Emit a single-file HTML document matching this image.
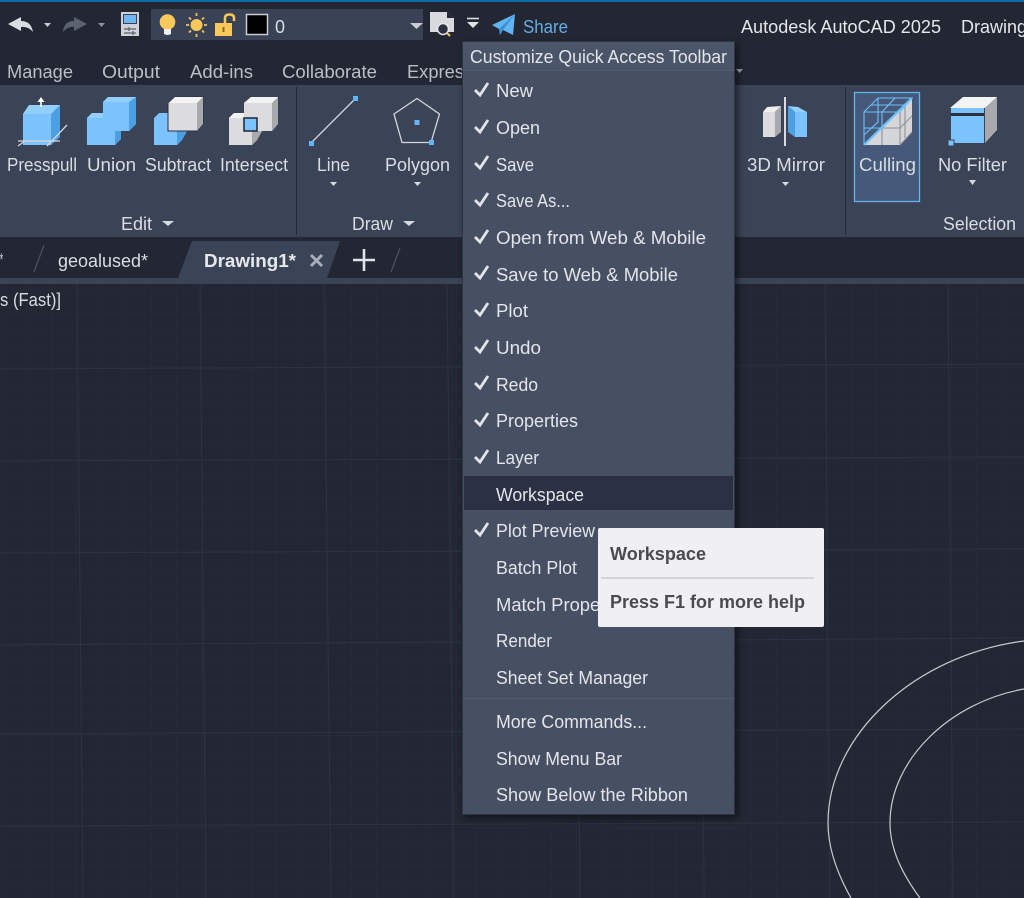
<!DOCTYPE html>
<html><head><meta charset="utf-8"><title>AutoCAD</title>
<style>
html,body{margin:0;padding:0;background:#222733;width:1024px;height:898px;overflow:hidden}
svg{display:block;filter:blur(.35px)}
text{font-family:"Liberation Sans",sans-serif;font-size:18.5px;fill:#d8dce3}
.m text{fill:#e2e5ea}
.b{font-weight:bold;font-size:18px}
</style></head><body>
<svg width="1024" height="898" viewBox="0 0 1024 898" xmlns="http://www.w3.org/2000/svg">
<defs>
<pattern id="g" width="25" height="18.4" patternUnits="userSpaceOnUse" x="2" y="0"><path d="M25 0V18.4M0 18.4H25" stroke="#262c38" stroke-width="1" fill="none"/></pattern>
<filter id="s" x="-10%" y="-5%" width="120%" height="110%"><feDropShadow dx="3" dy="3" stdDeviation="4" flood-color="#000" flood-opacity=".5"/></filter>
</defs>
<rect width="1024" height="898" fill="#222733"/>
<!-- canvas -->
<rect y="284" width="1024" height="614" fill="url(#g)"/>
<g stroke="#2d3341" stroke-width="1" fill="none">
<path d="M77 284L83 898M200 284L206 898M324 284L331 898M447 284L454 898M575 284L580 898M700 284L704 898M825 284L830 898M948 284L953 898"/>
<path d="M0 369L1024 364M0 461L1024 457M0 553L1024 549M0 645L1024 638M0 734L1024 729M0 826L1024 822"/>
</g>
<g fill="none" stroke="#c6cad1" stroke-width="1.200">
<path d="M1024 641C915 655 828 735 828 823C828 850 838 875 851 898"/>
<path d="M1024 689C950 702 890 760 890 823C890 850 903 875 920 898"/>
</g>
<text x="0" y="306" textLength="61" lengthAdjust="spacingAndGlyphs">s (Fast)]</text>

<!-- top bar -->
<rect width="1024" height="85" fill="#222733"/>
<rect width="1024" height="2" fill="#0b6eab"/>
<path d="M8 24L21 17V21Q31 21 33 32Q28 26 21 27V31Z" fill="#d9dce1"/>
<path d="M44 23H51L47.500 27Z" fill="#c9ccd2"/>
<path d="M87 24L74 17V21Q64 21 63 32Q68 26 74 27V31Z" fill="#5b6373"/>
<path d="M98 23H105L101.500 27Z" fill="#8b909a"/>
<rect x="121" y="12" width="18" height="24" fill="#cfd1d6"/>
<rect x="123.500" y="14.500" width="13" height="9" fill="#6db6f2" stroke="#3a4355"/>
<path d="M124 29H136M124 33H136" stroke="#5a6070" stroke-width="1.200"/>
<path d="M129 27V31M133 31V35" stroke="#5a6070" stroke-width="1.200"/>
<rect x="151" y="9" width="272" height="31" fill="#3a4355"/>
<circle cx="167.500" cy="22" r="7.800" fill="#f9c85b"/>
<path d="M164 29H171V34Q167.500 36 164 34Z" fill="#eef0f2"/>
<circle cx="196.500" cy="25" r="6" fill="#f9c85b"/>
<path d="M196.500 13V16M196.500 34V37M186 25H189M204 25H207M189 17.500L191 19.500M202 30.500L204 32.500M204 17.500L202 19.500M191 30.500L189 32.500" stroke="#f4c45c" stroke-width="1.800"/>
<rect x="215" y="23" width="17" height="13" fill="#f9c85b"/>
<path d="M225 23V18Q225 14.500 229.500 14.500Q234 14.500 234 18V21" fill="none" stroke="#f9c85b" stroke-width="2.500"/>
<rect x="222.500" y="27" width="2" height="5" fill="#8a6a2a"/>
<rect x="246.500" y="14.500" width="21" height="20" fill="#000" stroke="#c9ccd2" stroke-width="1.500"/>
<text x="275" y="33" textLength="10" lengthAdjust="spacingAndGlyphs">0</text>
<path d="M410 23H423L416.500 29Z" fill="#c9ccd2"/>
<path d="M430 12H447L454 18V32H430Z" fill="#d8dade"/>
<path d="M447 12L454 18H447Z" fill="#222733"/>
<circle cx="443" cy="29" r="5.500" fill="#2c3240" stroke="#e6e8ea" stroke-width="1.500"/>
<path d="M447 33L450 36" stroke="#f2c35c" stroke-width="2"/>
<path d="M467 18.500H479" stroke="#d8dade" stroke-width="1.600"/>
<path d="M467 22H479L473 28Z" fill="#e2e4e8"/>
<path d="M492 25L515 14L513 35L503 30L500 35L499 29Z" fill="#62b4f2"/>
<path d="M499 29L515 14L503 30L500 35Z" fill="#3c8fd4"/>
<text x="523" y="33" textLength="45" lengthAdjust="spacingAndGlyphs" style="fill:#66aee6">Share</text>
<text x="741" y="33" textLength="200" lengthAdjust="spacingAndGlyphs" style="fill:#e4e6ea">Autodesk AutoCAD 2025</text>
<text x="961" y="33" textLength="66" lengthAdjust="spacingAndGlyphs" style="fill:#e4e6ea">Drawing</text>

<!-- ribbon tabs -->
<text x="7" y="78" textLength="66" lengthAdjust="spacingAndGlyphs" style="fill:#b9bec7">Manage</text>
<text x="102" y="78" textLength="58" lengthAdjust="spacingAndGlyphs" style="fill:#b9bec7">Output</text>
<text x="190" y="78" textLength="63" lengthAdjust="spacingAndGlyphs" style="fill:#b9bec7">Add-ins</text>
<text x="282" y="78" textLength="95" lengthAdjust="spacingAndGlyphs" style="fill:#b9bec7">Collaborate</text>
<text x="407" y="78" textLength="66" lengthAdjust="spacingAndGlyphs" style="fill:#b9bec7">Express</text>

<!-- ribbon -->
<rect y="85" width="1024" height="152" fill="#3b4456"/>
<path d="M296.500 87V235M845.500 87V235" stroke="#232834" stroke-width="1"/>

<!-- presspull -->
<path d="M23 114L29 105H60V137L51 145H23Z" fill="#7cc2fc"/>
<path d="M23 114L29 105H60L51 114Z" fill="#93cffc"/>
<path d="M51 114L60 105V137L51 145Z" fill="#4c9fe2"/>
<path d="M18 141H60M18 146L25 141M47 146L67 125" stroke="#d8dade" stroke-width="1.300" fill="none"/>
<path d="M41 107V100" stroke="#fff" stroke-width="1.600"/>
<path d="M37.500 102L41 97L44.500 102Z" fill="#fff"/>
<!-- union -->
<path d="M87 118L92 113H103V102L108 97H136V124L129 131H121V139L115 145H87Z" fill="#7cc2fc"/>
<path d="M103 102L108 97H136L129 102ZM87 118L92 113H103V118Z" fill="#93cffc"/>
<path d="M129 102L136 97V124L129 131ZM115 131H121V139L115 145Z" fill="#4c9fe2"/>
<!-- subtract -->
<path d="M154 118L159 113H168V131H187L182 140L177 145H154Z" fill="#7cc2fc"/>
<path d="M177 131H187L182 140L177 145Z" fill="#4c9fe2"/>
<path d="M168 103L175 97H203V124L197 131H168Z" fill="#dcdcdf" stroke="#2a3040" stroke-width="1"/>
<path d="M168.500 103L175 97H203L197 103Z" fill="#f3f3f4"/>
<path d="M197 103L203 97V124L197 131Z" fill="#a8a9ad"/>
<!-- intersect -->
<path d="M229 118L234 113H244V131H262L257 140L252 145H229Z" fill="#dcdcdf"/>
<path d="M229 118L234 113H244V118Z" fill="#f3f3f4"/>
<path d="M244 103L251 97H278V124L272 131H244Z" fill="#dcdcdf"/>
<path d="M244 103L251 97H278L272 103Z" fill="#f3f3f4"/>
<path d="M272 103L278 97V124L272 131ZM252 131H262L257 140L252 145Z" fill="#a8a9ad"/>
<rect x="244" y="118" width="13" height="13" fill="#7cc2fc" stroke="#1f2533" stroke-width="1.500"/>
<!-- line -->
<path d="M311 143L355 99" stroke="#d4d7dd" stroke-width="1.300"/>
<rect x="309" y="141" width="5" height="5" fill="#63b6f5"/><rect x="353" y="96" width="5" height="5" fill="#63b6f5"/>
<!-- polygon -->
<path d="M417 98.500L439.500 114L431 142.500H402L394 114Z" fill="none" stroke="#d4d7dd" stroke-width="1.300"/>
<rect x="414.500" y="120" width="5" height="5" fill="#63b6f5"/><rect x="429" y="140" width="5" height="5" fill="#63b6f5"/>
<!-- mirror -->
<path d="M763 112L767 107L781 106L775 112Z" fill="#f0f0f1"/>
<path d="M763 112H775V137H763Z" fill="#dcdcdf"/>
<path d="M775 112L781 106V132L775 137Z" fill="#a8a9ad"/>
<rect x="784" y="97" width="2" height="49" fill="#dcdcdf"/>
<path d="M788 106L798 107L807 112H795Z" fill="#93cffc"/>
<path d="M795 112H807V137H795Z" fill="#7cc2fc"/>
<path d="M788 106L795 112V137L788 132Z" fill="#4c9fe2"/>
<!-- culling -->
<rect x="854.500" y="92.500" width="65" height="109" fill="#46597a" stroke="#62b6ef" stroke-width="1.300"/>
<path d="M912 98V132L900 145H864Z" fill="#d5d6d9"/>
<path d="M882 145V128H900M900 145V112M912 116L900 128M912 132L900 145M905 105V138" stroke="#8e9097" stroke-width="1.100" fill="none"/>
<g fill="none" stroke="#6ec0f8" stroke-width="1.100"><path d="M864 145V112L878 98H912L900 112H864M882 112V128M882 112L895 98M864 128H882M878 98V122L864 135M871 105H905"/></g>
<path d="M864 145L912 98" stroke="#6ec0f8" stroke-width="2.200"/>
<!-- no filter -->
<path d="M950 108L963 97H997L985 108Z" fill="#f3f3f4"/>
<path d="M985 108L997 97V130L985 143Z" fill="#a8a9ad"/>
<rect x="951" y="108" width="33" height="35" fill="#7cc2fc"/>
<rect x="951" y="113" width="33" height="3" fill="#29303e"/>
<rect x="948" y="140" width="6" height="6" fill="#7cc2fc" stroke="#3b4456"/>

<!-- ribbon labels -->
<text x="7" y="171" textLength="70" lengthAdjust="spacingAndGlyphs">Presspull</text>
<text x="87" y="171" textLength="49" lengthAdjust="spacingAndGlyphs">Union</text>
<text x="145" y="171" textLength="66" lengthAdjust="spacingAndGlyphs">Subtract</text>
<text x="220" y="171" textLength="68" lengthAdjust="spacingAndGlyphs">Intersect</text>
<text x="317" y="171" textLength="33" lengthAdjust="spacingAndGlyphs">Line</text>
<path d="M330 182H337L333.500 186Z" fill="#d5d9e0"/>
<text x="385" y="171" textLength="65" lengthAdjust="spacingAndGlyphs">Polygon</text>
<path d="M414 182H421L417.500 186Z" fill="#d5d9e0"/>
<text x="747" y="171" textLength="78" lengthAdjust="spacingAndGlyphs">3D Mirror</text>
<path d="M782 182H789L785.500 186Z" fill="#d5d9e0"/>
<text x="859" y="171" textLength="57" lengthAdjust="spacingAndGlyphs">Culling</text>
<text x="938" y="171" textLength="69" lengthAdjust="spacingAndGlyphs">No Filter</text>
<path d="M969 180H976L972.500 185Z" fill="#d5d9e0"/>
<text x="121" y="230" textLength="31" lengthAdjust="spacingAndGlyphs">Edit</text>
<path d="M162 221H174L168 226Z" fill="#d5d9e0"/>
<text x="352" y="230" textLength="41" lengthAdjust="spacingAndGlyphs">Draw</text>
<path d="M403 221H415L409 226Z" fill="#d5d9e0"/>
<text x="943" y="230" textLength="73" lengthAdjust="spacingAndGlyphs">Selection</text>

<!-- tabs -->
<rect y="237" width="1024" height="41" fill="#222733"/>
<rect y="278" width="1024" height="6" fill="#3b4456"/>
<path d="M192 241H340L327 278H178Z" fill="#3b4456"/>
<path d="M44 245L34 272M400 248L391 272" stroke="#4a5060" stroke-width="1.300"/>
<text x="0" y="266" textLength="3" lengthAdjust="spacingAndGlyphs">*</text>
<text x="58" y="267" textLength="90" lengthAdjust="spacingAndGlyphs">geoalused*</text>
<text class="b" x="204" y="267" textLength="92" lengthAdjust="spacingAndGlyphs" style="fill:#e6e8ec">Drawing1*</text>
<path d="M311 255L322 266M322 255L311 266" stroke="#a9aeb8" stroke-width="3"/>
<path d="M364 249V271M353 260H375" stroke="#dfe2e6" stroke-width="2.600"/>

<!-- menu -->
<path d="M736 69H743L739.500 73Z" fill="#9a9ea8"/>
<rect x="462.500" y="41.500" width="272" height="773" fill="#465064" stroke="#2f3542" filter="url(#s)"/>
<rect x="463" y="42" width="271" height="28" fill="#4b556a"/>
<path d="M463 70.500H734M463 698.500H734" stroke="#525c71"/>
<rect x="464" y="476" width="269" height="34" fill="#2b3142"/>
<g class="m">
<text x="470" y="63" textLength="257" lengthAdjust="spacingAndGlyphs">Customize Quick Access Toolbar</text>
<text x="496" y="97" textLength="37" lengthAdjust="spacingAndGlyphs">New</text>
<text x="496" y="134" textLength="44" lengthAdjust="spacingAndGlyphs">Open</text>
<text x="496" y="171" textLength="38" lengthAdjust="spacingAndGlyphs">Save</text>
<text x="496" y="207" textLength="74" lengthAdjust="spacingAndGlyphs">Save As...</text>
<text x="496" y="244" textLength="210" lengthAdjust="spacingAndGlyphs">Open from Web &amp; Mobile</text>
<text x="496" y="281" textLength="182" lengthAdjust="spacingAndGlyphs">Save to Web &amp; Mobile</text>
<text x="496" y="317" textLength="32" lengthAdjust="spacingAndGlyphs">Plot</text>
<text x="496" y="354" textLength="45" lengthAdjust="spacingAndGlyphs">Undo</text>
<text x="496" y="391" textLength="42" lengthAdjust="spacingAndGlyphs">Redo</text>
<text x="496" y="427" textLength="82" lengthAdjust="spacingAndGlyphs">Properties</text>
<text x="496" y="464" textLength="43" lengthAdjust="spacingAndGlyphs">Layer</text>
<text x="496" y="501" textLength="88" lengthAdjust="spacingAndGlyphs">Workspace</text>
<text x="496" y="537" textLength="99" lengthAdjust="spacingAndGlyphs">Plot Preview</text>
<text x="496" y="574" textLength="81" lengthAdjust="spacingAndGlyphs">Batch Plot</text>
<text x="496" y="611" textLength="139" lengthAdjust="spacingAndGlyphs">Match Properties</text>
<text x="496" y="647" textLength="56" lengthAdjust="spacingAndGlyphs">Render</text>
<text x="496" y="684" textLength="152" lengthAdjust="spacingAndGlyphs">Sheet Set Manager</text>
<text x="496" y="728" textLength="151" lengthAdjust="spacingAndGlyphs">More Commands...</text>
<text x="496" y="765" textLength="126" lengthAdjust="spacingAndGlyphs">Show Menu Bar</text>
<text x="496" y="801" textLength="192" lengthAdjust="spacingAndGlyphs">Show Below the Ribbon</text>
</g>
<g fill="none" stroke="#e2e5ea" stroke-width="2.800">
<path d="M475 90L480 95L488 83"/>
<path d="M475 127L480 132L488 120"/>
<path d="M475 163L480 168L488 156"/>
<path d="M475 200L480 205L488 193"/>
<path d="M475 237L480 242L488 230"/>
<path d="M475 273L480 278L488 266"/>
<path d="M475 310L480 315L488 303"/>
<path d="M475 347L480 352L488 340"/>
<path d="M475 383L480 388L488 376"/>
<path d="M475 420L480 425L488 413"/>
<path d="M475 457L480 462L488 450"/>
<path d="M475 530L480 535L488 523"/>
</g>

<!-- tooltip -->
<rect x="598" y="528" width="226" height="99" rx="2" fill="#f0eff1"/>
<path d="M601 578H814" stroke="#c4c4c7" stroke-width="1.200"/>
<text class="b" x="610" y="560" textLength="96" lengthAdjust="spacingAndGlyphs" style="fill:#4b4b4d">Workspace</text>
<text class="b" x="610" y="608" textLength="195" lengthAdjust="spacingAndGlyphs" style="fill:#4b4b4d">Press F1 for more help</text>
</svg>
</body></html>
